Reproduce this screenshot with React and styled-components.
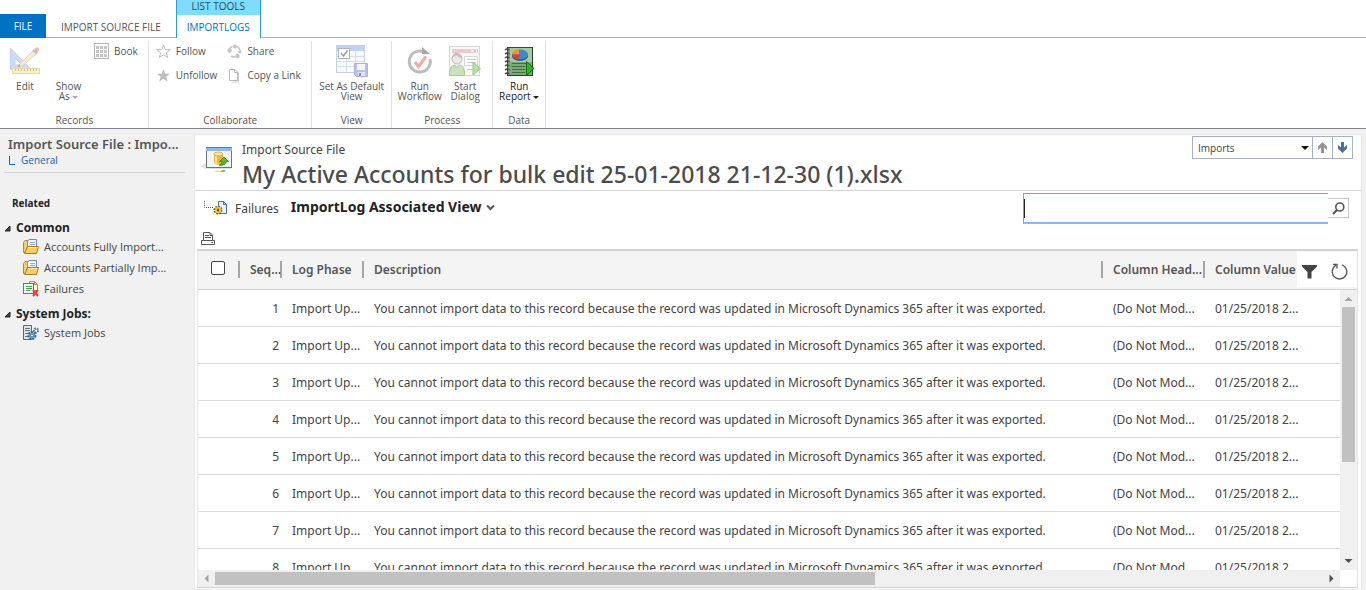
import React from "react";
import styled, { createGlobalStyle } from "styled-components";

const MESSAGE =
  "You cannot import data to this record because the record was updated in Microsoft Dynamics 365 after it was exported.";

const rows = [1, 2, 3, 4, 5, 6, 7, 8].map((n) => ({
  seq: n,
  phase: "Import Up...",
  description: MESSAGE,
  heading: "(Do Not Mod...",
  value: "01/25/2018 2...",
}));

export default function App() {
  return (
    <>
      <GlobalStyle />
      <Page>
        <Ribbon />
        <Body>
          <Sidebar />
          <Card>
            <RecordHeader />
            <ViewBar />
            <Toolbar>
              <IconButton aria-label="Print">
                <PrintIcon />
              </IconButton>
            </Toolbar>
            <LogGrid />
          </Card>
        </Body>
      </Page>
    </>
  );
}

function Ribbon() {
  return (
    <header>
      <Tabs>
        <FileTab>FILE</FileTab>
        <Tab>IMPORT SOURCE FILE</Tab>
        <ContextTab>
          <ContextTitle>LIST TOOLS</ContextTitle>
          <ActiveTab>IMPORTLOGS</ActiveTab>
        </ContextTab>
      </Tabs>
      <Groups>
        <Group>
          <GroupContent>
            <LargeButton $width={40}>
              <EditIcon />
              <span>Edit</span>
            </LargeButton>
            <LargeButton $width={47}>
              <IconSpace />
              <span>
                Show
                <br />
                As <Caret $muted />
              </span>
            </LargeButton>
            <SmallColumn>
              <SmallButton>
                <BookIcon />
                Book
              </SmallButton>
            </SmallColumn>
          </GroupContent>
          <GroupLabel>Records</GroupLabel>
        </Group>
        <Group>
          <GroupContent>
            <SmallColumn>
              <SmallButton>
                <StarIcon />
                Follow
              </SmallButton>
              <SmallButton>
                <StarIcon filled />
                Unfollow
              </SmallButton>
            </SmallColumn>
            <SmallColumn>
              <SmallButton>
                <ShareIcon />
                Share
              </SmallButton>
              <SmallButton>
                <CopyIcon />
                Copy a Link
              </SmallButton>
            </SmallColumn>
          </GroupContent>
          <GroupLabel>Collaborate</GroupLabel>
        </Group>
        <Group>
          <GroupContent>
            <LargeButton $width={70}>
              <DefaultViewIcon />
              <span>
                Set As Default
                <br />
                View
              </span>
            </LargeButton>
          </GroupContent>
          <GroupLabel>View</GroupLabel>
        </Group>
        <Group>
          <GroupContent>
            <LargeButton $width={46}>
              <WorkflowIcon />
              <span>
                Run
                <br />
                Workflow
              </span>
            </LargeButton>
            <LargeButton $width={45}>
              <DialogIcon />
              <span>
                Start
                <br />
                Dialog
              </span>
            </LargeButton>
          </GroupContent>
          <GroupLabel>Process</GroupLabel>
        </Group>
        <Group>
          <GroupContent>
            <LargeButton $width={43} $enabled>
              <ReportIcon />
              <span>
                Run
                <br />
                Report <Caret />
              </span>
            </LargeButton>
          </GroupContent>
          <GroupLabel>Data</GroupLabel>
        </Group>
      </Groups>
    </header>
  );
}

function Sidebar() {
  return (
    <Side>
      <SideTop>
        <SideTitle>Import Source File : Impo...</SideTitle>
        <SideSub href="#general">
          <svg width="8" height="9" viewBox="0 0 8 9">
            <path d="M1.500 0V8.500H7" fill="none" stroke="#0072c6" />
          </svg>
          General
        </SideSub>
      </SideTop>
      <Related>Related</Related>
      <SideSection>
        <SideHeading>
          <TriangleIcon />
          Common
        </SideHeading>
        <SideLink href="#fully">
          <FolderIcon />
          Accounts Fully Import...
        </SideLink>
        <SideLink href="#partially">
          <FolderIcon />
          Accounts Partially Imp...
        </SideLink>
        <SideLink href="#failures">
          <FailureIcon />
          Failures
        </SideLink>
      </SideSection>
      <SideSection>
        <SideHeading>
          <TriangleIcon />
          System Jobs:
        </SideHeading>
        <SideLink href="#jobs">
          <JobsIcon />
          System Jobs
        </SideLink>
      </SideSection>
    </Side>
  );
}

function RecordHeader() {
  return (
    <Header>
      <ImportIcon />
      <HeaderText>
        <Entity>Import Source File</Entity>
        <Title>My Active Accounts for bulk edit 25-01-2018 21-12-30 (1).xlsx</Title>
      </HeaderText>
      <Navigator>
        <SelectWrap>
          <Select aria-label="Record list" defaultValue="Imports">
            <option>Imports</option>
          </Select>
          <SelectArrow width="8" height="4" viewBox="0 0 8 4">
            <path d="M0 0H8L4 4Z" fill="#111" />
          </SelectArrow>
        </SelectWrap>
        <NavButton aria-label="Previous record">
          <ArrowIcon color="#969696" />
        </NavButton>
        <NavButton aria-label="Next record">
          <ArrowIcon color="#4f6f96" down />
        </NavButton>
      </Navigator>
    </Header>
  );
}

function ViewBar() {
  return (
    <ViewRow>
      <FailuresViewIcon />
      <ViewParent>Failures</ViewParent>
      <ViewPicker>
        ImportLog Associated View
        <svg width="9" height="7" viewBox="0 0 9 7">
          <path d="M1 1.500L4.500 5L8 1.500" fill="none" stroke="#555" strokeWidth="2" />
        </svg>
      </ViewPicker>
      <Search>
        <SearchInput aria-label="Search for records" />
        <TextCursor />
        <SearchButton aria-label="Search">
          <SearchIcon />
        </SearchButton>
      </Search>
    </ViewRow>
  );
}

function LogGrid() {
  return (
    <Grid>
      <GridBody>
        <Table>
          <colgroup>
            <col width="42" />
            <col width="42" />
            <col width="82" />
            <col />
            <col width="102" />
            <col width="100" />
            <col width="52" />
          </colgroup>
          <thead>
            <tr>
              <Th>
                <HeadCell $check>
                  <Checkbox type="checkbox" aria-label="Select all records" />
                </HeadCell>
              </Th>
              <Th>
                <HeadCell>Seq...</HeadCell>
              </Th>
              <Th>
                <HeadCell>Log Phase</HeadCell>
              </Th>
              <Th>
                <HeadCell>Description</HeadCell>
              </Th>
              <Th>
                <HeadCell>Column Head...</HeadCell>
              </Th>
              <Th>
                <HeadCell $last>Column Value</HeadCell>
              </Th>
              <Th />
            </tr>
          </thead>
          <tbody>
            {rows.map((row) => (
              <tr key={row.seq}>
                <Td />
                <Td $number>{row.seq}</Td>
                <Td>{row.phase}</Td>
                <Td>{row.description}</Td>
                <Td>{row.heading}</Td>
                <Td>{row.value}</Td>
                <Td />
              </tr>
            ))}
          </tbody>
        </Table>
        <GridTools>
          <IconButton aria-label="Filter">
            <FilterIcon />
          </IconButton>
          <IconButton aria-label="Refresh">
            <RefreshIcon />
          </IconButton>
        </GridTools>
        <VerticalBar>
          <svg width="17" height="17" viewBox="0 0 17 17">
            <path d="M4.500 11L8.500 7L12.500 11Z" fill="#a3a3a3" />
          </svg>
          <VerticalTrack>
            <VerticalThumb />
          </VerticalTrack>
          <svg width="17" height="17" viewBox="0 0 17 17">
            <path d="M4.500 6H12.500L8.500 10Z" fill="#505050" />
          </svg>
        </VerticalBar>
      </GridBody>
      <HorizontalBar>
        <svg width="17" height="17" viewBox="0 0 17 17">
          <path d="M10.500 4.500V12.500L6.500 8.500Z" fill="#a3a3a3" />
        </svg>
        <HorizontalTrack>
          <HorizontalThumb />
        </HorizontalTrack>
        <svg width="17" height="17" viewBox="0 0 17 17">
          <path d="M6.500 4.500V12.500L10.500 8.500Z" fill="#505050" />
        </svg>
      </HorizontalBar>
    </Grid>
  );
}

/* icons */

const EditIcon = () => (
  <svg width="32" height="32" viewBox="0 0 32 32">
    <path d="M1.500 3V24.500H22Z" fill="#cfdcf3" stroke="#c3d1ec" />
    <path d="M6 13V20H13Z" fill="#fff" stroke="#c3d1ec" />
    <rect x="3.500" y="23.500" width="27" height="5" fill="#fbefc4" stroke="#ead9a4" />
    <path d="M6.500 24v2M9.500 24v2M12.500 24v2M15.500 24v2M18.500 24v2M21.500 24v2M24.500 24v2M27.500 24v2" stroke="#d3c398" />
    <path d="M9 22L11.500 18L25 5L28 8L14 20.500Z" fill="#fbecd0" stroke="#ddd0bb" />
    <path d="M25 4L27 2.500Q28 2 29.500 3Q31 5 29.500 6L28 7.500Z" fill="#f0b6ae" />
    <path d="M24 5L28 8.500" stroke="#b5c3b4" strokeWidth="2" />
    <path d="M9 22L10 19.500L11.500 21Z" fill="#999" />
  </svg>
);

const BookIcon = () => (
  <svg width="15" height="16" viewBox="0 0 15 16">
    <rect x=".5" y=".5" width="14" height="15" fill="#fff" stroke="#b5b5b5" />
    {[3, 7, 11].map((y) =>
      [2, 6, 10].map((x) => (
        <rect key={`${x}-${y}`} x={x} y={y} width="3" height="3" fill="#c4c4c4" />
      ))
    )}
  </svg>
);

const StarIcon = ({ filled }) => (
  <svg width="15" height="15" viewBox="0 0 15 15">
    <path
      d={
        filled
          ? "M7.500 1L9.300 5.700H14L10.300 8.800L11.700 13.500L7.500 10.700L3.300 13.500L4.700 8.800L1 5.700H5.700Z"
          : "M7.500 1L9.300 5.700H14.300L10.300 8.800L11.800 13.700L7.500 10.800L3.200 13.700L4.700 8.800L.7 5.700H5.700Z"
      }
      fill={filled ? "#bdbdbd" : "#fff"}
      stroke={filled ? "none" : "#bdbdbd"}
    />
  </svg>
);

const ShareIcon = () => (
  <svg width="15" height="15" viewBox="0 0 15 15">
    <g fill="none" stroke="#c4c4c4" strokeWidth="1.600">
      <path d="M2 8A5.500 5.500 0 0 1 5.500 2.500" />
      <path d="M10 2.600A5.500 5.500 0 0 1 13 8" />
      <path d="M4 11.800A5.500 5.500 0 0 0 8.500 12.800" />
    </g>
    <circle cx="8" cy="2.500" r="2" fill="#c4c4c4" />
    <circle cx="2.600" cy="6.500" r="2.200" fill="#c4c4c4" />
    <circle cx="10.500" cy="12" r="2.200" fill="#c4c4c4" />
    <path d="M10.500 7H15L13 10Z" fill="#c4c4c4" />
  </svg>
);

const CopyIcon = () => (
  <svg width="15" height="15" viewBox="0 0 15 15">
    <path d="M2.500 1.500H8L10.500 4V12.500H2.500Z" fill="#fff" stroke="#b8b8b8" />
    <path d="M7.500 1.500V4.500H10.500" fill="none" stroke="#b8b8b8" />
    <path d="M11.500 4.500V14H4.500" fill="none" stroke="#cfcfcf" />
  </svg>
);

const DefaultViewIcon = () => (
  <svg width="32" height="32" viewBox="0 0 32 32">
    <rect x=".5" y=".5" width="28" height="27" fill="#f7f9fd" stroke="#c5d0e6" />
    <rect x="1" y="1" width="27" height="5" fill="#bfd3f3" />
    <path d="M1 11.500H28M1 16.500H28M1 21.500H28M10.500 6V27M19.500 6V27" stroke="#d4ddec" />
    <rect x="2.500" y="3.500" width="11" height="10" fill="#fff" stroke="#aeb4bf" />
    <path d="M5 8L7.500 11L11.500 5.500" fill="none" stroke="#97a0ad" strokeWidth="1.500" />
    <path d="M18.500 18.500H31.500V31.500H20.500L18.500 29.500Z" fill="#bcc0e8" stroke="#adb1dc" />
    <rect x="21" y="19" width="8" height="6" fill="#f6f7fd" />
    <rect x="22" y="27" width="7" height="4" fill="#e2e4f5" />
    <rect x="23" y="28" width="2" height="3" fill="#888fc8" />
  </svg>
);

const WorkflowIcon = () => (
  <svg width="32" height="32" viewBox="0 0 32 32">
    <path d="M22 8A10.500 10.500 0 1 0 26 14" fill="none" stroke="#bdbdbd" strokeWidth="3" />
    <path d="M18 2L26 9H18Z" fill="#a6a6a6" />
    <path d="M11 17L14.500 21.500L22 11.500" fill="none" stroke="#f2a99f" strokeWidth="3" />
  </svg>
);

const DialogIcon = () => (
  <svg width="32" height="32" viewBox="0 0 32 32">
    <rect x=".5" y="1.500" width="30" height="29" fill="#fafafa" stroke="#d9d5d8" />
    <rect x="3" y="4" width="26" height="4" fill="#f3c5d1" />
    <path d="M22 4.500L25 7.500M25 4.500L22 7.500M27.500 4V8" stroke="#fff" />
    <rect x="15.500" y="11.500" width="13" height="9" fill="#fff" stroke="#d8d8d8" />
    <path d="M18 14.500H27M18 17.500H27M18 24.500H24" stroke="#c9c9c9" />
    <circle cx="8" cy="14" r="5" fill="#eeeae7" stroke="#b9b9b9" />
    <path d="M3 12Q4 7 9 8Q13 9 13 13Q8 12 7 10Q6 12 3 12Z" fill="#c2c2c2" />
    <path d="M.500 30.500Q0 20 6 20L8 23L10 20Q16 20 15.500 30.500Z" fill="#c9e3bd" stroke="#a9cd9a" />
    <path d="M24 17L31.500 23.500L24 30Z" fill="#b5e0a4" stroke="#97cb84" />
  </svg>
);

const ReportIcon = () => (
  <svg width="32" height="32" viewBox="0 0 32 32">
    <rect x="4.500" y="2.500" width="25" height="28" fill="#7fa87a" stroke="#2d5130" />
    <rect x="7" y="3" width="22" height="14" fill="#a9c8a2" />
    <path d="M5 30.500H29.500V3" fill="none" stroke="#24422a" />
    <path d="M9 18.500H24M9 21.500H22M9 24.500H22M9 27.500H22" stroke="#3f6f43" />
    <ellipse cx="17" cy="11" rx="8" ry="5" fill="#275e97" />
    <ellipse cx="17" cy="9.500" rx="8" ry="5" fill="#3f88c9" />
    <path d="M16 9.500V4.500Q9 5 9 9.500Z" fill="#f0923a" />
    <path d="M17 9.500H9Q9.500 13.500 15 14.500Z" fill="#d9432d" />
    {[5, 9, 13, 17, 21, 25, 29].map((y) => (
      <path key={y} d={`M2 ${y}Q4 ${y - 2} 6.500 ${y}`} fill="none" stroke="#444" strokeWidth="1.200" />
    ))}
    <path d="M23.500 16.500L31 23.500L23.500 30.500Z" fill="#2fb51f" stroke="#0e6f0c" />
  </svg>
);

const TriangleIcon = () => (
  <svg width="7" height="7" viewBox="0 0 7 7">
    <path d="M6 1V6H1Z" fill="#444" stroke="#222" />
  </svg>
);

const FolderIcon = () => (
  <svg width="16" height="16" viewBox="0 0 16 16">
    <path d="M.5 13.500V3.500L2 1.500H5.500V13.500Z" fill="#f2cf72" stroke="#b58a35" />
    <path d="M4.500 11V2.500L6 .5H13.500V11Z" fill="#f5f9ff" stroke="#6e8db8" />
    <path d="M7 3.500H12M7 5.500H12" stroke="#8fabd3" />
    <path d="M1.500 14.500L4.500 7.500H15.500L13.500 14.500Z" fill="#f9cf62" stroke="#ad7b21" />
    <path d="M5 8.500H14.500" stroke="#fdebb2" />
  </svg>
);

const FailureIcon = () => (
  <svg width="16" height="16" viewBox="0 0 16 16">
    <path d="M6.500 .5H11.500L14.500 3.500V9.500H6.500Z" fill="#fff5e3" stroke="#c48b3f" />
    <path d="M11.500 .5V3.500H14.500" fill="none" stroke="#c48b3f" />
    <rect x=".5" y="2.500" width="10" height="10" fill="#eef5fc" stroke="#4d79ad" />
    <path d="M3 5.500H9M3 7.500H9M3 9.500H7" stroke="#43a047" />
    <path d="M10 9L15 15M15 9L10 15" stroke="#e8452c" strokeWidth="2" />
  </svg>
);

const JobsIcon = () => (
  <svg width="16" height="16" viewBox="0 0 16 16">
    <path d="M.5 .5H8.500V14.500H.5Z" fill="#dfe5e7" stroke="#5b6870" />
    <path d="M2 3.500H7M2 5.500H7M2 8.500H5M2 11.500H5" stroke="#65747c" />
    <circle cx="9" cy="10.500" r="3.500" fill="#9db8dc" stroke="#355f9b" strokeWidth="2" strokeDasharray="2 1" />
    <circle cx="9" cy="10.500" r="1.500" fill="#fff" stroke="#355f9b" />
    <circle cx="13" cy="5.500" r="2" fill="#fff" stroke="#3d69a6" strokeWidth="2" strokeDasharray="1.500 .8" />
  </svg>
);

const ImportIcon = () => (
  <svg width="32" height="32" viewBox="0 0 32 32">
    <path d="M0 22L5 19V23H30V25H4Z" fill="#e3e3e3" />
    <rect x="5.500" y="3.500" width="25" height="20" fill="#f2f4f6" stroke="#6a7580" />
    <rect x="5" y="3" width="26" height="4" fill="#8fb9e8" />
    <path d="M5 3.500H31" stroke="#467fb9" />
    <path d="M13 10V19Q17.500 22 22 19V10Z" fill="#f0b73b" />
    <path d="M14 10V19Q16 20 16 20V10Z" fill="#fce08c" />
    <ellipse cx="17.500" cy="10" rx="4.500" ry="2" fill="#fbe5a2" stroke="#c38b22" strokeWidth=".6" />
    <path d="M18 21Q21 21 21 17.500H18.500L23 13L27.500 17.500H25Q25 22 18 21Z" fill="#5fb834" stroke="#2f7d1a" strokeWidth=".8" />
    <path d="M13 28Q17 25 22 28Z" fill="#e7d59b" />
    <path d="M19 28Q22 24 25 27L23 28Z" fill="#8bbf72" />
  </svg>
);

const FailuresViewIcon = () => (
  <svg width="24" height="16" viewBox="0 0 24 16">
    <path d="M.5 1V7.500H10" fill="none" stroke="#555" strokeDasharray="1 1" />
    <path d="M14.500 1.500H19.500L22.500 4.500V13.500H14.500Z" fill="#e9f0fa" stroke="#4a6ea8" />
    <path d="M19.500 1.500V4.500H22.500" fill="none" stroke="#4a6ea8" />
    <circle cx="14" cy="10" r="3.500" fill="#e2bd3d" stroke="#8b6a12" strokeWidth="2" strokeDasharray="1.700 1" />
    <circle cx="14" cy="10" r="3" fill="#e8c650" />
    <circle cx="14" cy="10" r="1.200" fill="#5f4a10" />
  </svg>
);

const PrintIcon = () => (
  <svg width="14" height="13" viewBox="0 0 14 13">
    <path d="M2.500 8V.5H9L11.500 3V8" fill="#fff" stroke="#555" />
    <path d="M4 3.500H8M4 5.500H10M9 1V3.500H11" fill="none" stroke="#555" />
    <path d="M.5 8.500H13.500V12.500H.5Z" fill="#fff" stroke="#555" />
    <path d="M10 10.500H12" stroke="#555" />
  </svg>
);

const ArrowIcon = ({ color, down }) => (
  <svg width="9" height="11" viewBox="0 0 9 11">
    <path
      d={
        down
          ? "M3 0H6V5.500L9 3V6.500L4.500 11L0 6.500V3L3 5.500Z"
          : "M3 11H6V5.500L9 8V4.500L4.500 0L0 4.500V8L3 5.500Z"
      }
      fill={color}
    />
  </svg>
);

const SearchIcon = () => (
  <svg width="13" height="13" viewBox="0 0 13 13">
    <circle cx="7.800" cy="5" r="4" fill="none" stroke="#555" strokeWidth="1.600" />
    <path d="M5 8L1 12" stroke="#555" strokeWidth="2.200" />
  </svg>
);

const FilterIcon = () => (
  <svg width="15" height="14" viewBox="0 0 15 14">
    <path d="M0 0H15V1.500L9.500 7V13.500H5.500V7L0 1.500Z" fill="#444" />
  </svg>
);

const RefreshIcon = () => (
  <svg width="17" height="17" viewBox="0 0 17 17">
    <path d="M11 1.800A7.300 7.300 0 1 1 5 2.300" fill="none" stroke="#555" strokeWidth="1.300" />
    <path d="M2 1.500H6V5.500" fill="none" stroke="#555" strokeWidth="1.300" />
  </svg>
);

/* styles */

const GlobalStyle = createGlobalStyle`
  *, *::before, *::after {
    box-sizing: border-box;
  }
  body {
    margin: 0;
    background: #f1f1f2;
    color: #444;
    font-family: "Open Sans", "Noto Sans", sans-serif;
    font-size: 12px;
  }
  button, input, select {
    font: inherit;
    color: inherit;
  }
  button {
    padding: 0;
    border: none;
    background: none;
    white-space: nowrap;
  }
  a {
    color: inherit;
    text-decoration: none;
  }
  svg {
    display: block;
    flex: none;
  }
`;

const Page = styled.div`
  height: 100vh;
  display: flex;
  flex-direction: column;
  overflow: hidden;
`;

const Tabs = styled.nav`
  height: 38px;
  display: flex;
  align-items: flex-end;
  background: #fff;
  border-bottom: 1px solid #b1b3b5;
  font-size: 10px;
`;

const FileTab = styled.button`
  width: 46px;
  height: 24px;
  margin-bottom: -1px;
  background: #0072c6;
  color: #fff;
`;

const Tab = styled.button`
  height: 20px;
  padding: 0 15px;
  color: #555;
`;

const ContextTab = styled.div`
  align-self: stretch;
  display: flex;
  flex-direction: column;
  margin-bottom: -1px;
  border: solid #2a9dc9;
  border-width: 0 1px;
  background: #fff;
`;

const ContextTitle = styled.div`
  height: 15px;
  line-height: 13px;
  background: #80dcff;
  color: #1c4c60;
  text-align: center;
`;

const ActiveTab = styled.button`
  flex: 1;
  padding: 0 10px;
  color: #0072c6;
`;

const Groups = styled.div`
  display: flex;
  height: 91px;
  padding-top: 3px;
  background: #fff;
  border-bottom: 1px solid #83838c;
`;

const Group = styled.section`
  display: flex;
  flex-direction: column;
  justify-content: space-between;
  padding: 2px 4px 1px 5px;
  border-right: 1px solid #e1e1e1;
`;

const GroupContent = styled.div`
  display: flex;
  align-items: flex-start;
`;

const GroupLabel = styled.div`
  font-size: 10px;
  line-height: 14px;
  text-align: center;
  color: #555;
`;

const LargeButton = styled.button`
  width: ${(p) => p.$width}px;
  display: flex;
  flex-direction: column;
  align-items: center;
  gap: 4px;
  padding-top: 2px;
  font-size: 10px;
  line-height: 10px;
  color: ${(p) => (p.$enabled ? "#222" : "#555")};
`;

const IconSpace = styled.div`
  height: 32px;
`;

const Caret = styled.i`
  display: inline-block;
  vertical-align: middle;
  border: 3px solid transparent;
  border-bottom: none;
  border-top-color: ${(p) => (p.$muted ? "#aaa" : "#222")};
`;

const SmallColumn = styled.div`
  display: flex;
  flex-direction: column;
  gap: 8px;
  padding: 0 6px 0 2px;

  & + & {
    margin-left: 2px;
  }
`;

const SmallButton = styled.button`
  height: 16px;
  display: flex;
  align-items: center;
  gap: 5px;
  font-size: 10px;
  color: #555;
`;

const Body = styled.div`
  flex: 1;
  min-height: 0;
  display: flex;
`;

const Side = styled.aside`
  width: 194px;
  flex: none;
  padding-left: 4px;
`;

const SideTop = styled.div`
  margin-right: 9px;
  padding: 7px 0 4px 4px;
  border-bottom: 1px solid #d2d2d2;
`;

const SideTitle = styled.div`
  font-family: "Noto Sans", sans-serif;
  font-size: 13px;
  font-weight: 600;
  line-height: 17px;
  white-space: nowrap;
  color: #555;
`;

const SideSub = styled.a`
  display: flex;
  align-items: center;
  gap: 5px;
  font-size: 10px;
  line-height: 15px;
  color: #1160b7;
`;

const Related = styled.div`
  padding: 22px 8px 8px;
  font-size: 10px;
  font-weight: 700;
  line-height: 16px;
  color: #222;
`;

const SideSection = styled.div`
  margin-bottom: 5px;
`;

const SideHeading = styled.div`
  display: flex;
  align-items: center;
  gap: 5px;
  height: 18px;
  font-weight: 700;
  line-height: 18px;
  color: #222;
`;

const SideLink = styled.a`
  display: flex;
  align-items: center;
  gap: 5px;
  height: 21px;
  padding: 0 0 2px 19px;
  font-size: 11px;
  white-space: nowrap;
`;

const Card = styled.main`
  flex: 1;
  min-width: 0;
  display: flex;
  flex-direction: column;
  margin: 5px 4px 0 0;
  border: 1px solid #e8e8e9;
  background: #fff;
`;

const Header = styled.div`
  display: flex;
  padding: 0 8px 0 6px;
  height: 56px;
  border-bottom: 1px solid #d6d6d6;

  > svg {
    margin: 9px 6px 0 0;
  }
`;

const HeaderText = styled.div`
  flex: 1;
  min-width: 0;
  padding: 6px 0 0 3px;
`;

const Entity = styled.div`
  font-family: "Noto Sans", sans-serif;
  line-height: 17px;
`;

const Title = styled.h1`
  margin: 0;
  font-family: "Noto Sans", sans-serif;
  font-size: 23px;
  font-weight: 500;
  line-height: 32px;
  white-space: nowrap;
  color: #4c4c4c;
`;

const Navigator = styled.div`
  display: flex;
  height: 23px;
  margin-top: 1px;
`;

const SelectWrap = styled.div`
  position: relative;
`;

const Select = styled.select`
  appearance: none;
  width: 121px;
  height: 100%;
  padding: 0 5px;
  border: 1px solid #a8b1bf;
  border-radius: 0;
  background: #fff;
  font-size: 10px;
`;

const SelectArrow = styled.svg`
  position: absolute;
  top: 10px;
  right: 4px;
`;

const NavButton = styled.button`
  width: 20px;
  display: flex;
  align-items: center;
  justify-content: center;
  border: 1px solid #a8b1bf;
  border-left: none;
`;

const ViewRow = styled.div`
  display: flex;
  align-items: center;
  height: 34px;
  padding: 0 12px 0 9px;
`;

const ViewParent = styled.span`
  padding: 0 12px 0 7px;
  font-family: "Noto Sans", sans-serif;
`;

const ViewPicker = styled.button`
  display: flex;
  align-items: center;
  gap: 5px;
  padding-bottom: 2px;
  font-family: "Noto Sans", sans-serif;
  font-size: 14px;
  font-weight: 700;
  line-height: 18px;
  color: #222;
`;

const Search = styled.div`
  position: relative;
  display: flex;
  align-items: center;
  margin-left: auto;
`;

const SearchInput = styled.input`
  width: 305px;
  height: 31px;
  padding: 0 6px;
  border: 1px solid #7f9fd9;
  border-right: none;
  border-bottom: 2px solid #8fb3f3;
  outline: none;
`;

const TextCursor = styled.span`
  position: absolute;
  left: 1px;
  top: 6px;
  width: 1px;
  height: 19px;
  background: #222;
`;

const SearchButton = styled.button`
  width: 21px;
  height: 20px;
  display: flex;
  align-items: center;
  justify-content: center;
  border: 1px solid #c6c6c6;
  border-left: none;
`;

const Toolbar = styled.div`
  display: flex;
  height: 24px;
  padding: 7px 6px 0;
`;

const IconButton = styled.button`
  display: flex;
`;

const Grid = styled.section`
  flex: 1;
  min-height: 0;
  display: flex;
  flex-direction: column;
  margin: 0 3px 1px 2px;
  border: 1px solid #e6e6e6;
  border-top: 2px solid #d2d2d2;
  border-bottom-color: #d2d2d2;
`;

const GridBody = styled.div`
  flex: 1;
  min-height: 0;
  position: relative;
  overflow: hidden;
`;

const Table = styled.table`
  width: 100%;
  table-layout: fixed;
  border-collapse: collapse;
  font-family: "Noto Sans", sans-serif;
`;

const Th = styled.th`
  height: 38px;
  padding: 0;
  background: #f4f4f4;
  border-bottom: 1px solid #d2d2d2;
  font-weight: 600;
  text-align: left;
  white-space: nowrap;
  color: #555;
`;

const HeadCell = styled.div`
  height: 17px;
  line-height: 18px;
  padding-left: ${(p) => (p.$check ? 13 : 10)}px;
  border-right: ${(p) => (p.$last ? "none" : "2px solid #a6a6a6")};
`;

const Checkbox = styled.input`
  appearance: none;
  display: block;
  width: 14px;
  height: 14px;
  margin: 0;
  border: 1px solid #444;
  border-radius: 2px;
  background: #fff;
`;

const Td = styled.td`
  height: 37px;
  padding: ${(p) => (p.$number ? "2px 3px 0" : "2px 0 0 10px")};
  border-bottom: 1px solid #dcdcdc;
  text-align: ${(p) => (p.$number ? "right" : "left")};
  white-space: nowrap;
`;

const GridTools = styled.div`
  position: absolute;
  top: 1px;
  right: 0;
  width: 60px;
  height: 35px;
  display: flex;
  align-items: center;
  justify-content: space-between;
  padding: 4px 9px 0 5px;
  background: #fff;
`;

const VerticalBar = styled.div`
  position: absolute;
  top: 39px;
  right: 0;
  bottom: 0;
  width: 17px;
  display: flex;
  flex-direction: column;
  background: #f0f0f0;
`;

const VerticalTrack = styled.div`
  flex: 1;
  padding: 0 2px;
`;

const VerticalThumb = styled.div`
  height: 63%;
  background: #c1c1c1;
`;

const HorizontalBar = styled.div`
  display: flex;
  height: 17px;
  margin-right: 17px;
  background: #f0f0f0;
`;

const HorizontalTrack = styled.div`
  flex: 1;
  padding: 2px 0;
`;

const HorizontalThumb = styled.div`
  width: 59.6%;
  height: 100%;
  background: #c1c1c1;
`;
